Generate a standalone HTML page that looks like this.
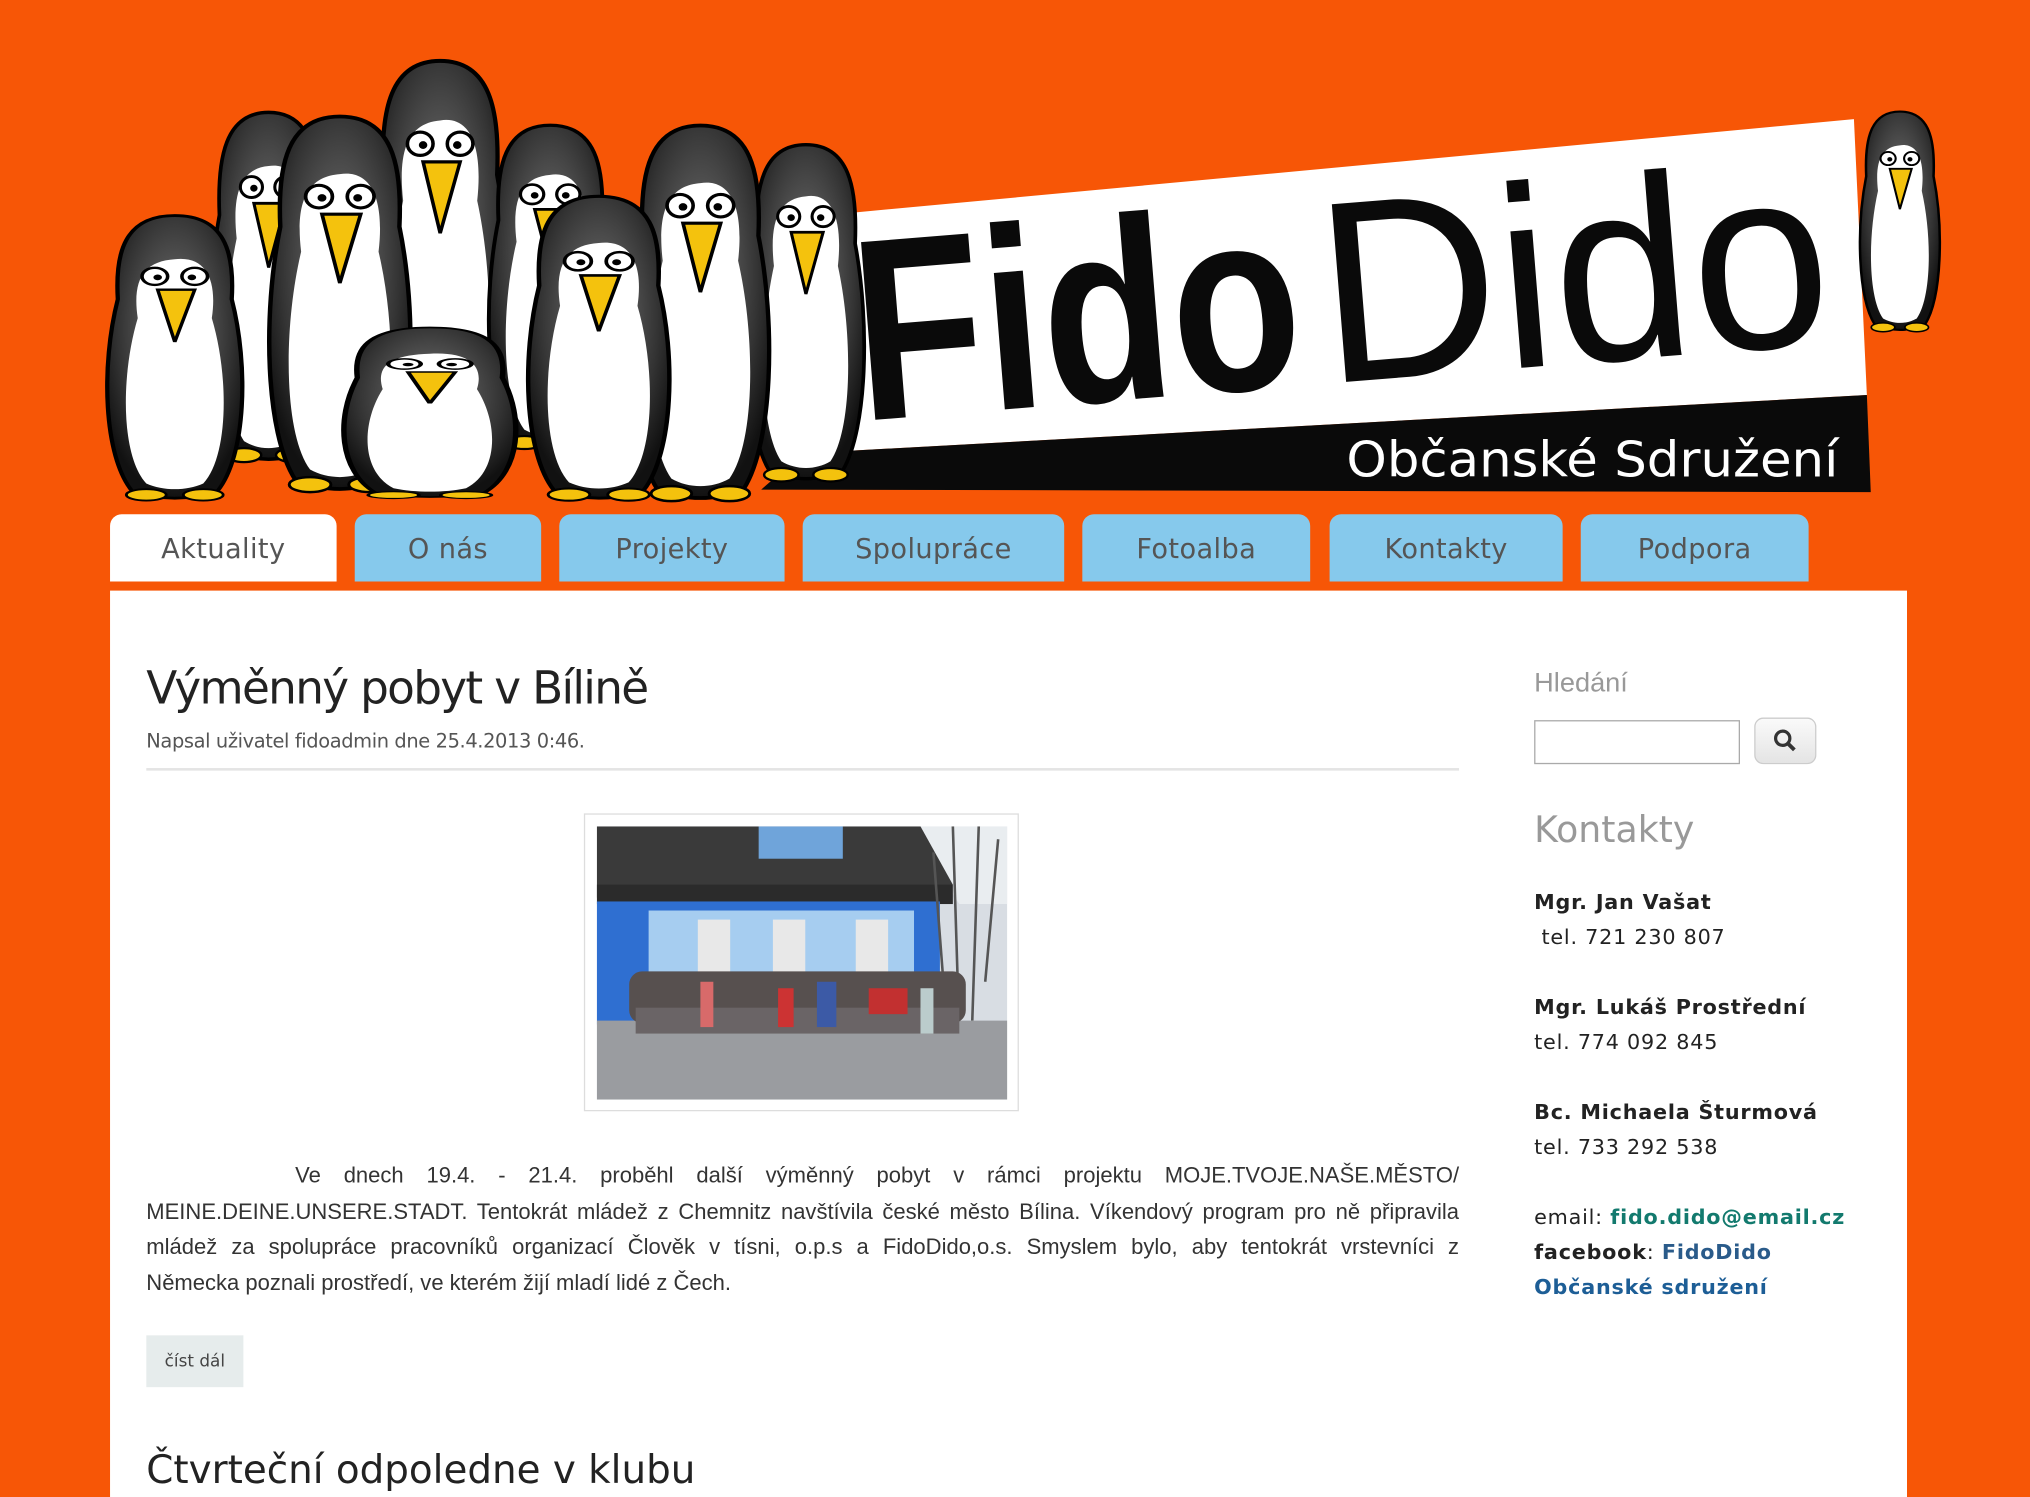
<!DOCTYPE html>
<html><head><meta charset="utf-8">
<style>
html,body{margin:0;padding:0;width:2030px;height:1461px;overflow:hidden;background:#f75606;}
#w{position:absolute;left:0;top:0;width:1568px;height:1128px;transform:scale(1.29464,1.2952);transform-origin:0 0;font-family:"Liberation Sans",sans-serif;}
.abs{position:absolute;}
.tab{position:absolute;top:397px;height:52px;background:#86c9ec;border-radius:9px 9px 0 0;color:#555;font-size:21px;text-align:center;line-height:54px;font-family:"DejaVu Sans","Liberation Sans",sans-serif;letter-spacing:0.3px}
.tab.a{background:#fff}
#box{position:absolute;left:85px;top:456px;width:1388px;height:700px;background:#fff;overflow:hidden}
.p{position:absolute;left:28px;width:1014px;font-size:17px;color:#333;text-align:justify;text-align-last:justify;white-space:nowrap;letter-spacing:0px;word-spacing:0px}
.side{position:absolute;left:1100px;font-family:"DejaVu Sans",sans-serif;font-size:16px;color:#222;white-space:nowrap;letter-spacing:0.6px}
.side b{font-weight:bold}
</style></head><body><div id="w">

<svg class="abs" style="left:0;top:0" width="1568" height="395" viewBox="0 0 1568 395">
<defs>
<radialGradient id="bg" cx="0.5" cy="0.4" r="0.6"><stop offset="0" stop-color="#777"/><stop offset="0.7" stop-color="#333"/><stop offset="1" stop-color="#111"/></radialGradient>
<symbol id="pg" viewBox="0 0 100 300" preserveAspectRatio="none" overflow="visible">
<path d="M50,2 C85,2 92,40 90,90 C102,160 100,255 80,292 C60,302 40,302 20,292 C0,255 -2,160 10,90 C8,40 15,2 50,2Z" fill="url(#bg)" stroke="#000" stroke-width="3"/>
<path d="M50,48 C72,44 80,70 76,110 C88,170 88,255 70,284 C58,292 42,292 30,284 C12,255 12,170 24,110 C20,70 28,50 50,48Z" fill="#fff"/>
<circle cx="36" cy="66" r="9" fill="#fff" stroke="#000" stroke-width="2.5"/><circle cx="38" cy="67" r="3" fill="#000"/>
<circle cx="64" cy="66" r="9" fill="#fff" stroke="#000" stroke-width="2.5"/><circle cx="62" cy="67" r="3" fill="#000"/>
<path d="M38,80 L64,80 L50,135Z" fill="#f4c20d" stroke="#000" stroke-width="2.5"/>
<ellipse cx="30" cy="296" rx="14" ry="6" fill="#f4c20d" stroke="#000" stroke-width="2"/>
<ellipse cx="70" cy="296" rx="14" ry="6" fill="#f4c20d" stroke="#000" stroke-width="2"/>
</symbol>
</defs>
<polygon points="650,165 1432,92 1442,305 620,350" fill="#fff"/>
<polygon points="620,350 1442,305 1445,380 588,378" fill="#0a0a0a"/>
<g transform="rotate(-4.6 665 322)">
<text x="665" y="325" font-family="Liberation Sans" font-weight="bold" font-size="200" fill="#0a0a0a" textLength="345" lengthAdjust="spacingAndGlyphs">Fido</text>
<text x="1025" y="325" font-family="Liberation Sans" font-size="200" fill="#0a0a0a" textLength="395" lengthAdjust="spacingAndGlyphs">Dido</text>
</g>
<text x="1040" y="368" font-family="DejaVu Sans" font-size="38" fill="#fff" textLength="380" lengthAdjust="spacingAndGlyphs">Občanské Sdružení</text>
<use href="#pg" x="160" y="85" width="95" height="270"/>
<use href="#pg" x="285" y="45" width="110" height="300"/>
<use href="#pg" x="375" y="95" width="100" height="250"/>
<use href="#pg" x="575" y="110" width="95" height="260"/>
<use href="#pg" x="485" y="95" width="112" height="290"/>
<use href="#pg" x="205" y="88" width="115" height="290"/>
<use href="#pg" x="80" y="165" width="110" height="220"/>
<use href="#pg" x="405" y="150" width="115" height="235"/>
<use href="#pg" x="262" y="252" width="140" height="132"/>
<use href="#pg" x="1435" y="85" width="65" height="170"/>
</svg>

<div class="tab a" style="left:85px;width:175px">Aktuality</div>
<div class="tab" style="left:274px;width:144px">O nás</div>
<div class="tab" style="left:432px;width:174px">Projekty</div>
<div class="tab" style="left:620px;width:202px">Spolupráce</div>
<div class="tab" style="left:836px;width:176px">Fotoalba</div>
<div class="tab" style="left:1027px;width:180px">Kontakty</div>
<div class="tab" style="left:1221px;width:176px">Podpora</div>

<div id="box">
<div class="abs" style="left:28px;top:56px;font-size:35px;color:#222;font-family:'DejaVu Sans',sans-serif;letter-spacing:-1.3px">Výměnný pobyt v Bílině</div>
<div class="abs" style="left:28px;top:107px;font-size:15px;color:#555;font-family:'DejaVu Sans',sans-serif;letter-spacing:-0.3px">Napsal uživatel fidoadmin dne 25.4.2013 0:46.</div>
<div class="abs" style="left:28px;top:137px;width:1014px;height:2px;background:#e4e4e4"></div>
<div class="abs" style="left:366px;top:172px;width:334px;height:228px;border:1px solid #ddd;background:#fff"></div>
<svg class="abs" style="left:376px;top:182px" width="317" height="211" viewBox="0 0 317 211">
<rect width="317" height="211" fill="#d8dde3"/>
<polygon points="0,0 317,0 317,60 280,60 240,0" fill="#e9edf0"/>
<polygon points="0,0 250,0 275,45 265,55 0,55" fill="#3a3a3a"/>
<rect x="125" y="0" width="65" height="25" fill="#6fa4da"/>
<rect x="0" y="45" width="275" height="15" fill="#2b2b2b"/>
<rect x="0" y="58" width="265" height="95" fill="#2f6fd1"/>
<rect x="40" y="65" width="205" height="85" fill="#a6cdf0"/>
<rect x="78" y="72" width="25" height="45" fill="#e8e8e8"/><rect x="136" y="72" width="25" height="45" fill="#e8e8e8"/><rect x="200" y="72" width="25" height="45" fill="#e8e8e8"/>
<path d="M275,0 L280,160 M295,0 L290,150 M260,20 L270,150 M310,10 L300,120" stroke="#555" stroke-width="2"/>
<rect x="0" y="150" width="317" height="61" fill="#9a9ca0"/>
<rect x="25" y="112" width="260" height="40" fill="#57504f" rx="10"/>
<rect x="30" y="140" width="250" height="20" fill="#6a6466"/>
<rect x="80" y="120" width="10" height="35" fill="#d86a6a"/><rect x="140" y="125" width="12" height="30" fill="#c33"/><rect x="210" y="125" width="30" height="20" fill="#c23030"/>
<rect x="170" y="120" width="15" height="35" fill="#3c5aa6"/><rect x="250" y="125" width="10" height="35" fill="#bcc"/>
</svg>
<div class="p" style="top:442px;text-indent:115px;">Ve dnech 19.4. - 21.4. proběhl další výměnný pobyt v rámci projektu MOJE.TVOJE.NAŠE.MĚSTO/</div>
<div class="p" style="top:470px">MEINE.DEINE.UNSERE.STADT. Tentokrát mládež z Chemnitz navštívila české město Bílina. Víkendový program pro ně připravila</div>
<div class="p" style="top:497px">mládež za spolupráce pracovníků organizací Člověk v tísni, o.p.s a FidoDido,o.s. Smyslem bylo, aby tentokrát vrstevníci z</div>
<div class="p" style="top:525px;text-align-last:left">Německa poznali prostředí, ve kterém žijí mladí lidé z Čech.</div>
<div class="abs" style="left:28px;top:575px;width:75px;height:40px;background:#e6ecec;font-size:13px;color:#444;text-align:center;line-height:42px;font-family:'DejaVu Sans',sans-serif">číst dál</div>
<div class="abs" style="left:28px;top:662px;font-size:30px;color:#222;font-family:'DejaVu Sans',sans-serif">Čtvrteční odpoledne v klubu</div>

<div class="side" style="top:60px;font-family:'Liberation Sans',sans-serif;font-size:21px;color:#999;letter-spacing:0">Hledání</div>
<div class="abs" style="left:1100px;top:100px;width:157px;height:32px;border:1px solid #aaa;background:#fff"></div>
<div class="abs" style="left:1270px;top:98px;width:46px;height:34px;border:1px solid #ccc;border-radius:7px;background:linear-gradient(#fafafa,#e4e4e4)">
<svg width="46" height="34"><circle cx="21" cy="15" r="5.5" fill="none" stroke="#333" stroke-width="2.5"/><line x1="25" y1="19" x2="30" y2="24" stroke="#333" stroke-width="3"/></svg></div>
<div class="side" style="top:168px;font-size:28px;color:#999;letter-spacing:0">Kontakty</div>
<div class="side" style="top:227px;line-height:27px"><b>Mgr. Jan Vašat</b><br>&nbsp;tel. 721 230 807<br><br>
<b>Mgr. Lukáš Prostřední</b><br>tel. 774 092 845<br><br>
<b>Bc. Michaela Šturmová</b><br>tel. 733 292 538</div>
<div class="side" style="top:470px;line-height:27px">email: <b style="color:#137a6e">fido.dido@email.cz</b><br><b>facebook</b>: <b style="color:#2a5b8a">FidoDido</b><br><b style="color:#1d5e96">Občanské sdružení</b></div>
</div>
</div></body></html>
